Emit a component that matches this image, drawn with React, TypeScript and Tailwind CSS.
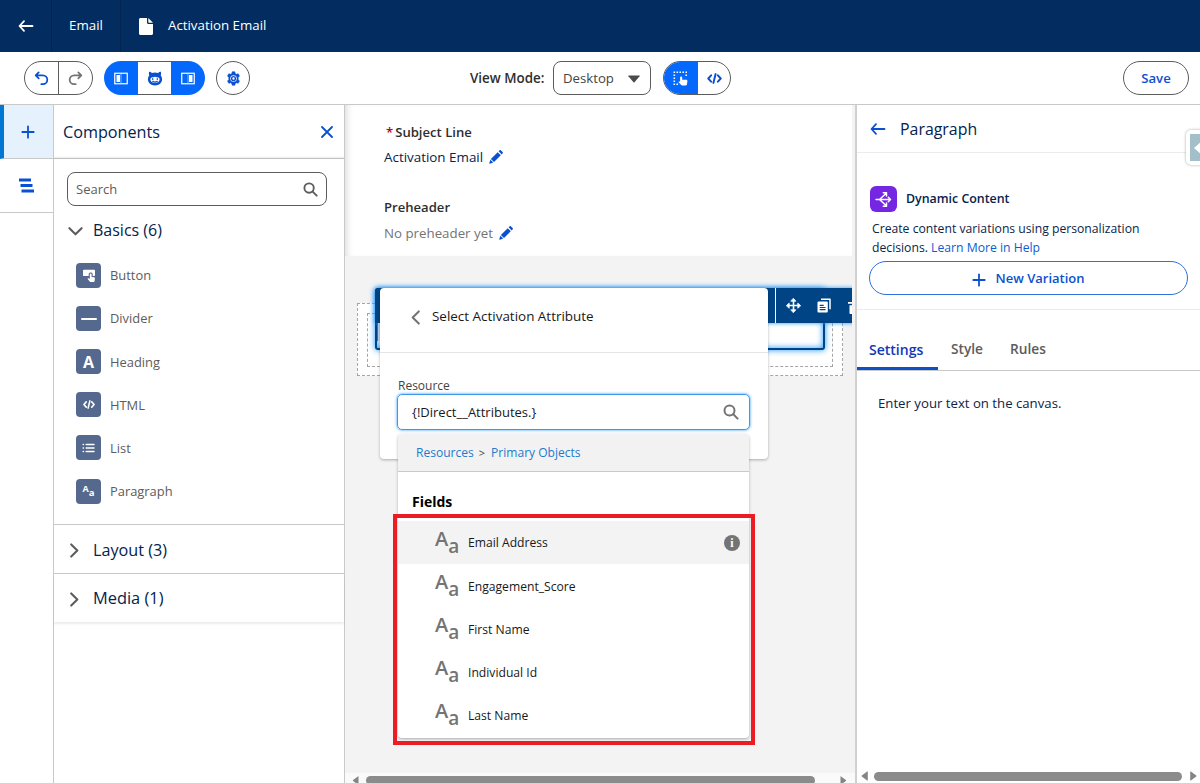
import type { ReactNode } from 'react';

interface IconProps {
    className?: string;
}

const UndoIcon = ({ className }: IconProps) => (
    <svg className={className} viewBox="0 0 16 16" fill="none" stroke="currentColor" strokeWidth={1.9} strokeLinecap="round" strokeLinejoin="round">
        <path d="M5 1.500 1.800 4.700 5 7.900M2.100 4.700h7.400a4.700 4.700 0 0 1 0 9.400H7.800" />
    </svg>
);

const PanelIcon = ({ side }: { side: 'left' | 'right' }) => (
    <svg className={side === 'left' ? 'h-[13px] w-[14px]' : 'h-[13px] w-[14px] -scale-x-100'} viewBox="0 0 14 13" fill="none">
        <rect x="0.75" y="1.25" width="12.5" height="10.5" stroke="currentColor" strokeWidth={1.2} />
        <rect x="2.500" y="3" width="3.500" height="7" fill="currentColor" />
        <path d="M7 2v9" stroke="currentColor" strokeWidth={0.5} />
    </svg>
);

const EinsteinIcon = () => (
    <svg className="h-[15px] w-[16px]" viewBox="0 0 16 15">
        <path fill="#0b50d0" d="M2.200.8c1 0 2 .5 2.700 1.300a9 9 0 0 1 6.200 0C11.800 1.300 12.800.8 13.800.8c.5 1.200.4 2.600-.1 3.700.9 1 1.400 2.300 1.400 3.700 0 3.700-3.100 6.200-7.100 6.200S.9 11.900.9 8.200c0-1.400.5-2.700 1.400-3.700C1.800 3.400 1.700 2 2.200.8z" />
        <path fill="#fff" d="M3.400 8.600c0-1.700 1.300-2.500 2.700-2.300.7.1 1.200-.6 1.900-.6s1.200.700 1.900.6c1.400-.2 2.700.6 2.700 2.300 0 2-2.100 3.500-4.600 3.500s-4.600-1.500-4.600-3.500z" />
        <path fill="none" stroke="#0b50d0" strokeWidth={1.200} strokeLinecap="round" d="M5.700 7.700v.8M10.300 7.700v.8M5.700 10.300c1.200.8 3.400.8 4.600 0" />
    </svg>
);

const GearIcon = () => (
    <svg className="h-[15px] w-[15px]" viewBox="0 0 16 16">
        <path
            fill="#0b50d0"
            stroke="#0b50d0"
            strokeWidth={0.6}
            strokeLinejoin="round"
            fillRule="evenodd"
            d="M6.600.8h2.800l.5 2 1.100.7 2-.6 1.400 2.400L13 6.800v2.400l1.400 1.500-1.400 2.400-2-.6-1.100.7-.5 2H6.600l-.5-2-1.100-.7-2 .6-1.400-2.400L3 9.200V6.800L1.600 5.300 3 2.900l2 .6 1.100-.7.500-2zM8 4.200a3.800 3.800 0 1 0 0 7.600 3.800 3.800 0 0 0 0-7.600z"
        />
        <circle cx="8" cy="8" r="2" fill="none" stroke="#0b50d0" strokeWidth={1.500} />
    </svg>
);

const CodeIcon = ({ className }: IconProps) => (
    <svg className={className} viewBox="0 0 16 12" fill="none" stroke="currentColor" strokeWidth={2.100} strokeLinecap="round" strokeLinejoin="round">
        <path d="M4.300 2.500 1.200 6l3.100 3.500M11.700 2.500 14.800 6l-3.100 3.500M9.200 1.200 6.800 10.800" />
    </svg>
);

const SelectIcon = () => (
    <svg className="h-[15px] w-[15px]" viewBox="0 0 15 15">
        <path d="M.5 1.300h13.500M.5 13.200h6" fill="none" stroke="#fff" strokeWidth={1.600} strokeDasharray="1.600 1.370" />
        <path d="M1.300 3.500v8.500M13.200 3.500v3" fill="none" stroke="#fff" strokeWidth={1.600} strokeDasharray="1.600 1.370" />
        <path fill="#fff" d="M8.200 5.500c.6 0 1 .4 1 1v2.300h3.900c.8 0 1.300.5 1.300 1.200l-.4 3.300c-.1.700-.5 1.100-1.200 1.100H9.200c-.5 0-.9-.2-1.200-.6L5.400 11c.5-.6 1.200-.6 1.700-.2V6.500c0-.6.500-1 1.100-1z" />
    </svg>
);

const ArrowLeft = ({ className }: IconProps) => (
    <svg className={className} viewBox="0 0 16 14" fill="none" stroke="currentColor" strokeWidth={1.800} strokeLinecap="round" strokeLinejoin="round">
        <path d="M6 2.200 1.500 7 6 11.800M1.800 7h12.700" />
    </svg>
);

const PlusIcon = ({ className }: IconProps) => (
    <svg className={className} viewBox="0 0 14 14" fill="none" stroke="currentColor" strokeWidth={1.800} strokeLinecap="round">
        <path d="M7 1.300v11.400M1.300 7h11.400" />
    </svg>
);

const SearchIcon = ({ className }: IconProps) => (
    <svg className={className} viewBox="0 0 16 16" fill="none" stroke="currentColor" strokeWidth={2} strokeLinecap="round">
        <circle cx="6.500" cy="6.500" r="5" />
        <path d="m10.300 10.300 4.300 4.300" />
    </svg>
);

const Chevron = ({ className }: IconProps) => (
    <svg className={className} viewBox="0 0 16 16" fill="none" stroke="currentColor" strokeWidth={2.200} strokeLinecap="round" strokeLinejoin="round">
        <path d="m4.500 1.500 6.500 6.500-6.500 6.500" />
    </svg>
);

const PencilIcon = () => (
    <svg className="-mt-[2px] h-[14px] w-[14px]" viewBox="0 0 14 14" fill="#0b50d0">
        <path d="M8.700 2.200 11.800 5.300 5 12.100 1.900 9zM9.600 1.300l.9-.8c.5-.5 1.100-.5 1.500-.1l1.600 1.600c.4.4.4 1-.1 1.500l-.8.9zM1.400 9.800l2.800 2.800-3.300 1.100c-.4.100-.7-.1-.6-.6z" />
    </svg>
);

const ButtonGlyph = () => (
    <svg className="h-[14px] w-[14px]" viewBox="0 0 14 14">
        <path fill="#fff" d="M2 .8h10c.6 0 1 .4 1 1v4.200c0 .6-.4 1-1 1h-1.300V5.300C10.700 3 6.700 3 6.700 5.300V7H2c-.6 0-1-.4-1-1V1.800c0-.6.4-1 1-1z" />
        <path fill="#fff" d="M8.700 4.500c.5 0 .9.4.9.9v2.500l2.400.4c.6.100 1 .5.900 1.100l-.4 2.800c-.1.500-.5.900-1 .9H8.800c-.4 0-.7-.1-.9-.4L5.500 9.800c.4-.6 1.100-.6 1.600-.2l.7.5V5.400c0-.5.400-.9.900-.9z" />
    </svg>
);

const ListGlyph = () => (
    <svg className="h-[12px] w-[13px]" viewBox="0 0 13 12" fill="none" stroke="#fff" strokeWidth={1.500} strokeLinecap="round">
        <path d="M4.200 2.500h7.800M4.200 6h7.800M4.200 9.500h7.800M1.200 2.500h.3M1.200 6h.3M1.200 9.500h.3" />
    </svg>
);

const BranchIcon = () => (
    <svg className="h-[17px] w-[17px]" viewBox="0 0 17 17" fill="none" stroke="#fff" strokeWidth={1.500} strokeLinecap="round" strokeLinejoin="round">
        <path d="M1 8.500h14.500M13.300 6.200l2.200 2.300-2.200 2.300M4.500 8.500l6.800-6.300M8.300 1.700h3.200v3.200M4.500 8.500l6.800 6.300M8.300 15.300h3.200v-3.200" />
    </svg>
);

const MoveIcon = () => (
    <svg className="h-[15px] w-[15px] shrink-0" viewBox="0 0 15 15" fill="none" stroke="#fff" strokeWidth={1.600} strokeLinecap="round" strokeLinejoin="round">
        <path d="M7.500 1.500v12M1.500 7.500h12" />
        <path fill="#fff" strokeWidth={0.800} d="M7.500.6 9.900 3.200H5.100zM7.500 14.400 9.900 11.800H5.100zM.6 7.500l2.600-2.400v4.800zM14.400 7.500l-2.600-2.400v4.800z" />
    </svg>
);

const CopyIcon = () => (
    <svg className="h-[15px] w-[14px]" viewBox="0 0 14 15">
        <path fill="none" stroke="#fff" strokeWidth={1.500} strokeLinejoin="round" d="M4 1.200h9v10" />
        <rect x="0.500" y="3.500" width="10.300" height="11" rx="1" fill="#fff" />
        <path stroke="#014486" strokeWidth={1.200} d="M2.700 7.300h4M2.700 9.500h5.800M2.700 11.700h5.800" />
    </svg>
);

const Triangle = ({ className }: IconProps) => (
    <svg className={className} viewBox="0 0 8 10" fill="#858585">
        <path d="M6.800.8v8.400c0 .4-.4.500-.7.300L.8 5.500c-.3-.3-.3-.7 0-1L6.100.5c.3-.2.700-.1.700.3z" />
    </svg>
);

const BASICS: { label: string; glyph: ReactNode }[] = [
    { label: 'Button', glyph: <ButtonGlyph /> },
    { label: 'Divider', glyph: <span className="h-[2px] w-4 rounded-sm bg-white" /> },
    { label: 'Heading', glyph: <span className="text-[16px] leading-none font-bold text-white">A</span> },
    { label: 'HTML', glyph: <CodeIcon className="h-[9px] w-[12px] text-white" /> },
    { label: 'List', glyph: <ListGlyph /> },
    {
        label: 'Paragraph',
        glyph: (
            <span className="flex items-center font-bold leading-none text-white">
                <span className="-mt-[5px] text-[9px]">A</span>
                <span className="mt-[4px] text-[9.500px]">a</span>
            </span>
        ),
    },
];

const FIELDS = ['Email Address', 'Engagement_Score', 'First Name', 'Individual Id', 'Last Name'];

function Toolbar() {
    return (
        <div className="flex h-[53px] shrink-0 items-center border-b border-[#c9c9c9] pl-6 pr-[11px]">
            <div className="flex h-[34px] w-[69px] overflow-hidden rounded-full border border-[#5c5c5c]">
                <button className="flex flex-1 items-center justify-center border-r border-[#5c5c5c] text-[#0b50d0]">
                    <UndoIcon className="h-[15px] w-[15px]" />
                </button>
                <button className="flex flex-1 items-center justify-center text-[#747474]">
                    <UndoIcon className="h-[15px] w-[15px] -scale-x-100" />
                </button>
            </div>
            <div className="ml-[11px] flex h-[34px] w-[101px] overflow-hidden rounded-full bg-[#0568fd] text-white">
                <button className="flex w-[34px] items-center justify-center">
                    <PanelIcon side="left" />
                </button>
                <button className="flex w-[33px] items-center justify-center border-y border-[#5c5c5c] bg-white">
                    <EinsteinIcon />
                </button>
                <button className="flex w-[34px] items-center justify-center">
                    <PanelIcon side="right" />
                </button>
            </div>
            <button className="ml-[11px] flex h-[34px] w-[34px] items-center justify-center rounded-full border border-[#5c5c5c]">
                <GearIcon />
            </button>
            <span className="ml-[220px] w-[83px] whitespace-nowrap pt-px text-[13.4px] font-semibold text-[#2e2e2e]">View Mode:</span>
            <button className="flex h-[34px] w-[98px] items-center justify-between rounded-lg border border-[#5c5c5c] pl-[9px] pr-[10px] pt-px text-[13.2px] text-[#444]">
                Desktop
                <svg className="h-[8px] w-[12px]" viewBox="0 0 12 8" fill="#4a4a4a">
                    <path d="M.8.500h10.400c.5 0 .6.400.4.700L6.500 7.300c-.3.300-.7.300-1 0L.4 1.200C.2.900.3.500.8.500z" />
                </svg>
            </button>
            <div className="ml-3 flex h-[34px] w-[68px] overflow-hidden rounded-full border border-[#5c5c5c]">
                <button className="-my-px -ml-px flex w-[35px] items-center justify-center border-r border-[#5c5c5c] bg-[#0568fd]">
                    <SelectIcon />
                </button>
                <button className="flex flex-1 items-center justify-center text-[#0b50d0]">
                    <CodeIcon className="h-[11px] w-[15px]" />
                </button>
            </div>
            <button className="ml-auto flex h-[34px] w-[66px] items-center justify-center rounded-full border border-[#5c5c5c] pt-px text-[13.2px] font-semibold text-[#0b50d0]">
                Save
            </button>
        </div>
    );
}

function ComponentsPanel() {
    return (
        <aside className="flex w-[291px] shrink-0 flex-col border-r border-[#c9c9c9]">
            <div className="flex h-[54px] items-center justify-between border-b border-[#c0c0c0] pl-[9px] pr-[11px] shadow-[inset_0_-3px_2px_-2px_rgba(0,0,0,0.08)]">
                <h2 className="pt-[2px] text-[16.2px] text-[#03234d]">Components</h2>
                <svg className="h-3 w-3" viewBox="0 0 12 12" fill="none" stroke="#0b50d0" strokeWidth={1.800} strokeLinecap="round">
                    <path d="m1 1 10 10M11 1 1 11" />
                </svg>
            </div>
            <div className="ml-[13px] mt-[13px] mr-[17px] flex h-[34px] items-center justify-between rounded-lg border border-[#5c5c5c] pl-[8px] pr-2 text-[13px] text-[#5c5c5c]">
                <span className="pt-px">Search</span>
                <SearchIcon className="h-[15px] w-[15px]" />
            </div>
            <div className="mt-[10px] flex h-7 items-center pl-[14px] text-[16px] text-[#03234d]">
                <Chevron className="mr-[10px] mt-[3px] h-[15px] w-[15px] rotate-90 text-[#5c5c5c]" />
                Basics (6)
            </div>
            <ul className="mt-[10px] h-[271px] border-b border-[#c9c9c9] pl-[22px]">
                {BASICS.map(({ label, glyph }) => (
                    <li key={label} className="flex h-[43.1px] items-center text-[12.9px] text-[#5c5c5c]">
                        <span className="mr-[9px] flex h-[25px] w-[25px] items-center justify-center rounded-[4px] bg-[#54698d]">
                            {glyph}
                        </span>
                        <span className="pt-px">{label}</span>
                    </li>
                ))}
            </ul>
            <div className="flex h-[49px] items-center border-b border-[#c9c9c9] pl-[13px] pt-[3px] text-[16.2px] text-[#03234d]">
                <Chevron className="mr-[11px] h-[15px] w-[15px] text-[#5c5c5c]" />
                Layout (3)
            </div>
            <div className="flex h-[48px] items-center pl-[13px] pt-px text-[16.4px] text-[#03234d] shadow-[0_2px_2px_rgba(0,0,0,0.08)]">
                <Chevron className="mr-[11px] mt-px h-[15px] w-[15px] text-[#5c5c5c]" />
                Media (1)
            </div>
        </aside>
    );
}

function AttributeDialog() {
    return (
        <div className="absolute left-[35px] top-[183px] h-[171px] w-[388px] rounded-[4px] bg-white shadow-[0_1px_3px_rgba(0,0,0,0.3)]">
            <div className="flex h-[65px] items-center border-b border-[#e5e5e5] pl-[28px] pb-[7px] text-[13.45px] text-[#181818]">
                <Chevron className="mr-[9px] mt-[2px] h-[15px] w-[15px] rotate-180 text-[#747474]" />
                Select Activation Attribute
            </div>
            <div className="pl-[17px] pr-[18px] pt-[23px]">
                <div className="ml-px h-[18px] pt-px text-[12px] leading-[18px] text-[#444]">Resource</div>
                <div className="flex h-[36px] items-center justify-between rounded-[5px] border-[1.5px] border-[#3f98ea] pl-[14px] pr-[10px] text-[13px] text-[#181818] shadow-[0_0_3px_#1b96ff]">
                    <span className="pt-px">{'{!Direct__Attributes.}'}</span>
                    <SearchIcon className="h-4 w-4 text-[#747474]" />
                </div>
            </div>
            {/* Resource picker */}
            <div className="absolute left-[18px] top-[146px] w-[351px] rounded-[4px] bg-white shadow-[0_1px_3px_rgba(0,0,0,0.3)]">
                <div className="flex h-[38px] items-center rounded-t-[4px] border-b border-[#c9c9c9] bg-[#f2f2f2] pl-[18px] pt-[2px] text-[12.05px] text-[#1f7bcb]">
                    Resources
                    <span className="ml-[5px] mr-[6px] text-[11px] text-[#444]">&gt;</span>
                    Primary Objects
                </div>
                <div className="h-[49px] pl-[14px] pt-[20px] text-[14px] leading-5 font-bold text-black">Fields</div>
                <ul className="h-[217px]">
                    {FIELDS.map((field, i) => (
                        <li
                            key={field}
                            className={`flex h-[43.1px] items-center pl-[37px] pr-[9px] text-[12.15px] text-[#181818] ${i === 0 ? 'bg-[#f3f3f3]' : ''}`}
                        >
                            <span className="mr-[8px] flex w-[25px] items-center leading-none text-[#747474]">
                                <span className="-mt-[7px] text-[20px] font-semibold">A</span>
                                <span className="mt-[8px] text-[19px] font-semibold">a</span>
                            </span>
                            <span className="pt-[2px]">{field}</span>
                            {i === 0 && (
                                <span className="ml-auto flex h-4 w-4 items-center justify-center rounded-full bg-[#747474] font-['Liberation_Serif',serif] text-[12px] leading-none font-bold text-white">
                                    i
                                </span>
                            )}
                        </li>
                    ))}
                </ul>
            </div>
            <div className="absolute left-[13px] top-[226px] h-[231px] w-[362px] border-4 border-[#eb1c24]" />
        </div>
    );
}

function Canvas() {
    return (
        <main className="relative flex w-[512px] shrink-0 flex-col border-r-2 border-[#d0d0d0] bg-[#f3f3f3]">
            <section className="mr-[3px] h-[151px] bg-white pl-[39px] pt-[17px] text-[13.3px] shadow-[inset_6px_0_6px_-4px_rgba(0,0,0,0.14)]">
                <div className="flex h-5 items-center pl-[2px] pt-px text-[13.1px] font-semibold text-[#2e2e2e]">
                    <span className="mr-[2px] text-[#ba0517]">*</span>
                    Subject Line
                </div>
                <div className="mt-[5px] flex h-5 items-center gap-[6px] pt-px text-[13.4px] text-[#03234d]">
                    Activation Email
                    <PencilIcon />
                </div>
                <div className="mt-[31px] flex h-5 items-center text-[13.1px] font-semibold text-[#2e2e2e]">Preheader</div>
                <div className="mt-[5px] flex h-5 items-center gap-[6px] pt-px text-[#747474]">
                    No preheader yet
                    <PencilIcon />
                </div>
            </section>
            <div className="mr-[3px] h-[412px] overflow-hidden pl-[12px] pt-[47px]">
                <div className="h-[73px] w-[486px] border border-dashed border-[#a5a5a5] bg-white p-[9px]">
                    <div className="relative h-[54px] border border-dashed border-[#a5a5a5]">
                        {/* Selected block with its floating toolbar */}
                        <div className="absolute left-[7px] top-[-26px] h-[62px] w-[450px] rounded-[3px] border-2 border-[#014486] bg-white shadow-[0_0_6px_#1b96ff,inset_0_0_6px_#1b96ff]">
                            <div className="ml-[-2px] mt-[-2px] flex h-[35px] w-[500px] items-center rounded-tl-[3px] bg-[#014486] shadow-[0_0_4px_#1b96ff]">
                                <div className="ml-[400px] mr-[10px] h-full w-px bg-white" />
                                <MoveIcon />
                                <span className="ml-[16px]">
                                    <CopyIcon />
                                </span>
                                <svg className="ml-[17px] mt-[3px] h-[14px] w-[13px] shrink-0" viewBox="0 0 13 14" fill="#fff">
                                    <path d="M0 2h4V.5h5V2h4v1.800H0zM1.500 5.200h10V13c0 .6-.4 1-1 1h-8c-.6 0-1-.4-1-1z" />
                                </svg>
                            </div>
                            <div className="h-[18px] w-4 border-l border-[#4c6c9c] bg-[#b8cff0]" />
                        </div>
                    </div>
                </div>
            </div>
            <AttributeDialog />
            <div className="mt-auto flex h-[10px] items-start overflow-hidden bg-[#fafafa] pl-[7px] pt-[3px]">
                <Triangle className="h-[9px] w-[8px] shrink-0" />
                <div className="ml-[6px] h-[9px] w-[449px] shrink-0 rounded-full bg-[#8b8b8b]" />
                <Triangle className="ml-[24px] h-[9px] w-[8px] shrink-0 rotate-180" />
            </div>
        </main>
    );
}

function SettingsPanel() {
    return (
        <aside className="relative flex min-w-0 flex-1 flex-col overflow-hidden">
            <div className="flex h-[48px] items-center border-b border-[#ececec] pl-[13px] text-[15.9px] text-[#03234d]">
                <ArrowLeft className="mr-[14px] h-[14px] w-[16px] text-[#0b50d0]" />
                <span className="pt-[2px]">Paragraph</span>
            </div>
            <div className="h-[157px] border-b border-[#ececec] pl-[12px] pr-[12px] pt-[33px]">
                <div className="flex h-[26px] items-center pl-px text-[12.4px] font-semibold text-[#03234d]">
                    <span className="mr-[9px] flex h-[26px] w-[27px] items-center justify-center rounded-[6px] bg-[#7526e3]">
                        <BranchIcon />
                    </span>
                    Dynamic Content
                </div>
                <p className="ml-[3px] mt-[8px] whitespace-nowrap text-[12.2px] leading-[18.5px] text-[#0b2447]">
                    Create content variations using personalization
                    <br />
                    decisions. <a className="text-[#0b5cd5]">Learn More in Help</a>
                </p>
                <button className="mt-[4px] flex h-[34px] w-[319px] items-center justify-center rounded-full border border-[#2e70de] text-[13px] font-semibold text-[#0b50d0]">
                    <PlusIcon className="mr-[9px] mt-[3px] h-[14px] w-[14px]" />
                    <span className="pt-px">New Variation</span>
                </button>
            </div>
            <nav className="flex h-[61px] border-b border-[#c9c9c9] pt-[18px] text-[13.700px] font-semibold text-[#5c5c5c]">
                <div className="-mb-px flex h-[42px] w-[81px] items-center border-b-[3px] border-[#0b50c8] pl-[12px] pt-[3px] text-[14px] text-[#0d39b8]">Settings</div>
                <div className="ml-[13px] flex h-[42px] w-[59px] items-center">Style</div>
                <div className="flex h-[42px] items-center">Rules</div>
            </nav>
            <p className="mt-[22px] pl-[21px] text-[13.200px] leading-5 text-[#0b2447]">Enter your text on the canvas.</p>
            <div className="mt-auto flex h-[13px] items-center pb-px pl-[4px]">
                <Triangle className="h-[10px] w-[8px]" />
                <div className="ml-[5px] h-[9px] w-[308px] rounded-full bg-[#8b8b8b]" />
                <Triangle className="ml-[7px] h-[10px] w-[8px] rotate-180" />
            </div>
            {/* Collapsed drawer handle on the window edge */}
            <div className="absolute right-[-6px] top-[25px] h-[35px] w-[20px] rounded-[5px] bg-white p-[4px] shadow-[0_0_3px_rgba(0,0,0,0.35)]">
                <div className="flex h-[27px] w-[16px] items-center bg-[#a3bfca] pl-[4px]">
                    <svg className="h-[14px] w-[8px]" viewBox="0 0 8 14" fill="#fff">
                        <path d="M8 0v14L0 7z" />
                    </svg>
                </div>
            </div>
        </aside>
    );
}

export default function App() {
    return (
        <div className="flex h-[783px] w-[1200px] flex-col overflow-hidden bg-white font-['Open_Sans','Noto_Sans',sans-serif]">
            <header className="flex h-[52px] shrink-0 items-center bg-[#032d60] text-[13.3px] font-medium text-white">
                <div className="flex h-full w-[52px] items-center justify-center border-r border-[#04244e]">
                    <ArrowLeft className="h-[14px] w-[16px]" />
                </div>
                <div className="flex h-full w-[69px] items-center justify-center border-r border-[#04244e]">Email</div>
                <svg className="ml-[18px] mr-[15px] h-[17px] w-[14px]" viewBox="0 0 14 17" fill="#fff">
                    <path d="M1.500 0H8v4.500C8 5.400 8.600 6 9.500 6H14v9.500c0 .8-.7 1.500-1.500 1.500h-11C.7 17 0 16.300 0 15.500v-14C0 .7.7 0 1.500 0zM9.300 0 14 4.700H9.800c-.3 0-.5-.2-.5-.5z" />
                </svg>
                Activation Email
            </header>
            <Toolbar />
            <div className="flex min-h-0 flex-1">
                <nav className="w-[54px] shrink-0 border-r border-[#c9c9c9]">
                    <button className="flex h-[54px] w-full items-center justify-center border-b border-l-4 border-b-[#c9c9c9] border-l-[#0176d3] bg-[#e5f2fd] pr-[2px] text-[#0b50d0]">
                        <PlusIcon className="h-[14px] w-[14px]" />
                    </button>
                    <button className="flex h-[54px] w-full items-center justify-center border-b border-[#c9c9c9]">
                        <svg className="h-[16px] w-[15px]" viewBox="0 0 15 16" stroke="#0b50d0" strokeWidth={2.800}>
                            <path d="M0 2h12M1.500 7.500h12M2.500 13H15" />
                        </svg>
                    </button>
                </nav>
                <ComponentsPanel />
                <Canvas />
                <SettingsPanel />
            </div>
        </div>
    );
}
